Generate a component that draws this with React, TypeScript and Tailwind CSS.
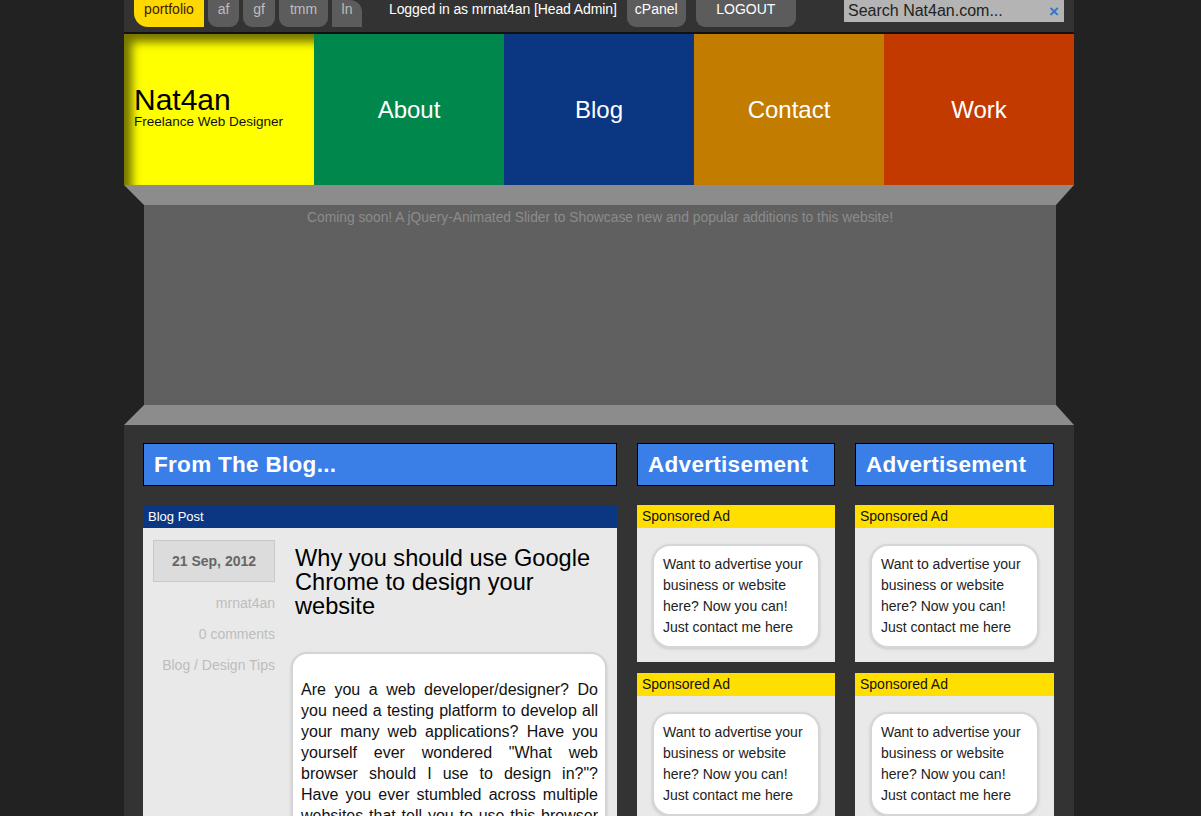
const NAV = [
  { label: "About", bg: "bg-[#00874b]" },
  { label: "Blog", bg: "bg-[#0b3682]" },
  { label: "Contact", bg: "bg-[#c27c00]" },
  { label: "Work", bg: "bg-[#c23a00]" },
];

const SMALL_TABS = [
  { label: "af", w: "w-[31px]", shape: "rounded-b-[9px]" },
  { label: "gf", w: "w-[32px]", shape: "rounded-b-[9px]" },
  { label: "tmm", w: "w-[49px]", shape: "rounded-b-[9px]" },
  { label: "ln", w: "w-[30px]", shape: "rounded-tr-[12px]" },
];

function SectionHeading({ children }: { children: React.ReactNode }) {
  return (
    <div className="h-[43px] border border-black bg-[#3a7fe8] pl-[10px] flex items-center">
      <span className="text-[22.5px] font-bold text-white tracking-[0.3px]">{children}</span>
    </div>
  );
}

function AdCard() {
  return (
    <div>
      <div className="h-[23px] bg-[#ffdf00] pl-[5px] text-[14px] leading-[23px] text-[#111]">Sponsored Ad</div>
      <div className="bg-[#e9e9ea] h-[134px] px-[15px] pt-[16px]">
        <div className="h-[104px] rounded-[18px] bg-white border-2 border-[#d6d6d6] shadow-[0_1px_3px_rgba(0,0,0,0.15)] pl-[9px] pr-[12px] pt-[8px] text-[14px] leading-[21px] text-[#222]">
          Want to advertise your business or website here? Now you can! Just contact me here
        </div>
      </div>
    </div>
  );
}

export default function App() {
  return (
    <div className="min-h-screen bg-[#222] font-['Liberation_Sans',Arial,sans-serif]">
      <div className="ml-[124px] w-[950px]">

        {/* top bar */}
        <div className="h-[34px] bg-[#333] border-b-2 border-[#111] flex items-start pl-[10px] text-[14px] leading-[18px]">
          <div className="w-[70px] h-[27px] bg-[#ffd800] rounded-bl-[14px] text-center text-[#3b1d00]">portfolio</div>
          {SMALL_TABS.map((t) => (
            <div key={t.label} className={`${t.w} ${t.shape} h-[27px] ml-[4px] bg-[#5c5c5c] text-center text-[#bdbdbd]`}>
              {t.label}
            </div>
          ))}
          <div className="ml-[27px] text-white tracking-[-0.1px]">Logged in as mrnat4an [Head Admin]</div>
          <div className="ml-[10px] w-[59px] h-[27px] bg-[#5c5c5c] rounded-b-[9px] text-center text-white">cPanel</div>
          <div className="ml-[10px] w-[100px] h-[27px] bg-[#5c5c5c] rounded-b-[9px] text-center text-white">LOGOUT</div>
          <div className="ml-auto mr-[10px] w-[220px] h-[22px] bg-[#b4b4b4] flex items-center pl-[4px] pr-[5px]">
            <span className="text-[16px] text-[#222] flex-1">Search Nat4an.com...</span>
            <span className="text-[#3a72c8] text-[17px] font-bold leading-none">×</span>
          </div>
        </div>

        {/* nav tiles */}
        <div className="grid grid-cols-5 h-[151px]">
          <div className="bg-[#ffff00] shadow-[inset_8px_8px_10px_rgba(0,0,0,0.55)] flex flex-col justify-center pl-[10px] pb-[4px]">
            <div className="text-[30px] leading-[28px] text-black">Nat4an</div>
            <div className="text-[13.5px] leading-[16px] text-[#111]">Freelance Web Designer</div>
          </div>
          {NAV.map((n) => (
            <div key={n.label} className={`${n.bg} flex items-center justify-center text-white text-[24px]`}>
              {n.label}
            </div>
          ))}
        </div>

        {/* slider frame */}
        <div className="h-[20px] bg-[#8c8c8c] [clip-path:polygon(0_0,100%_0,calc(100%-18px)_100%,20px_100%)]" />
        <div className="ml-[20px] mr-[18px] h-[200px] bg-[#606060] text-center text-[13.8px] text-[#8c8c8c] pt-[3px]">
          Coming soon! A jQuery-Animated Slider to Showcase new and popular additions to this website!
        </div>
        <div className="h-[20px] bg-[#8c8c8c] [clip-path:polygon(20px_0,calc(100%-18px)_0,100%_100%,0_100%)]" />

        {/* content */}
        <div className="bg-[#333] pl-[19px] pr-[20px] pt-[18px] pb-[20px] flex gap-[20px]">
          <div className="w-[474px]">
            <SectionHeading>From The Blog...</SectionHeading>
            <div className="mt-[19px]">
              <div className="h-[23px] bg-[#0b3682] pl-[5px] text-[13px] leading-[23px] text-white">Blog Post</div>
              <div className="bg-[#e9e9ea] flex pb-[20px]">
                <div className="w-[132px] pl-[10px] pt-[12px] shrink-0">
                  <div className="h-[42px] bg-[#dcdcdc] border border-[#c9c9c9] flex items-center justify-center text-[14px] font-bold text-[#666]">
                    21 Sep, 2012
                  </div>
                  <div className="text-right text-[14px] text-[#bdbdbd] mt-[6px] leading-[31px]">
                    <div>mrnat4an</div>
                    <div>0 comments</div>
                    <div>Blog / Design Tips</div>
                  </div>
                </div>
                <div className="flex-1 pl-[16px] pr-[10px] pt-[18px]">
                  <h2 className="pl-[4px] text-[23.6px] leading-[24px] text-black">
                    Why you should use Google Chrome to design your website
                  </h2>
                  <div className="mt-[34px] rounded-[16px] bg-white border-2 border-[#d4d4d4] shadow-[0_1px_3px_rgba(0,0,0,0.15)] pl-[8px] pr-[7px] pt-[25px] pb-[12px]">
                    <p className="text-[16px] leading-[21px] text-[#111] text-justify">
                      Are you a web developer/designer? Do you need a testing platform to develop all your many web applications? Have you yourself ever wondered "What web browser should I use to design in?"? Have you ever stumbled across multiple websites that tell you to use this browser or that browser, and you just can't decide which one is right for you?
                    </p>
                  </div>
                </div>
              </div>
            </div>
          </div>

          <div className="w-[198px]">
            <SectionHeading>Advertisement</SectionHeading>
            <div className="mt-[19px] flex flex-col gap-[11px]">
              <AdCard />
              <AdCard />
            </div>
          </div>

          <div className="w-[199px]">
            <SectionHeading>Advertisement</SectionHeading>
            <div className="mt-[19px] flex flex-col gap-[11px]">
              <AdCard />
              <AdCard />
            </div>
          </div>
        </div>
      </div>
    </div>
  );
}
